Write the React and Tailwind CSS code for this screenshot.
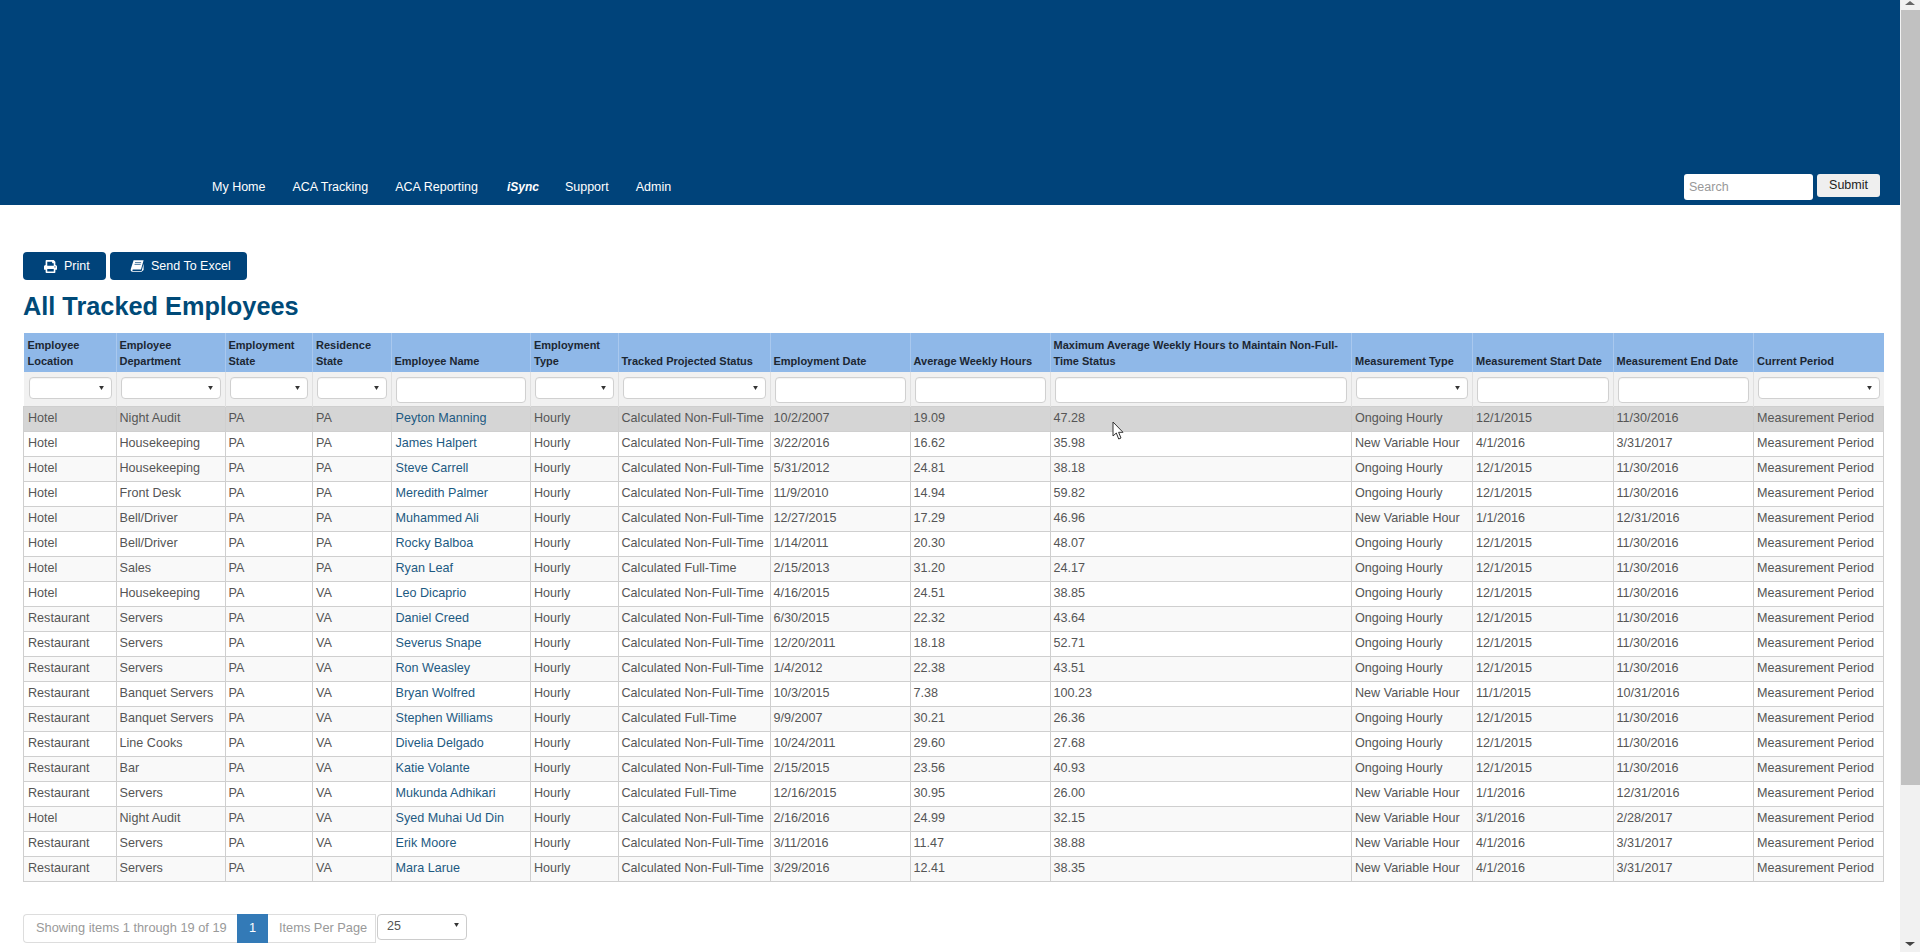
import { FaPrint } from "react-icons/fa";

const NFT = "Calculated Non-Full-Time";
const FT = "Calculated Full-Time";
const ONG = "Ongoing Hourly";
const NVH = "New Variable Hour";

const columns = [
  { label: "Employee Location", width: "w-[92.5px]", filter: "select" },
  { label: "Employee Department", width: "w-[109px]", filter: "select" },
  { label: "Employment State", width: "w-[87.5px]", filter: "select" },
  { label: "Residence State", width: "w-[78.5px]", filter: "select" },
  { label: "Employee Name", width: "w-[139.5px]", filter: "input" },
  { label: "Employment Type", width: "w-[87.5px]", filter: "select" },
  { label: "Tracked Projected Status", width: "w-[152px]", filter: "select" },
  { label: "Employment Date", width: "w-[140px]", filter: "input" },
  { label: "Average Weekly Hours", width: "w-[140px]", filter: "input" },
  { label: "Maximum Average Weekly Hours to Maintain Non-Full-Time Status", width: "w-[301.5px]", filter: "input" },
  { label: "Measurement Type", width: "w-[121px]", filter: "select" },
  { label: "Measurement Start Date", width: "w-[140.5px]", filter: "input" },
  { label: "Measurement End Date", width: "w-[140.5px]", filter: "input" },
  { label: "Current Period", width: "w-[130px]", filter: "select" },
];

const employees = [
  ["Hotel", "Night Audit", "PA", "Peyton Manning", NFT, "10/2/2007", "19.09", "47.28", ONG, "12/1/2015", "11/30/2016"],
  ["Hotel", "Housekeeping", "PA", "James Halpert", NFT, "3/22/2016", "16.62", "35.98", NVH, "4/1/2016", "3/31/2017"],
  ["Hotel", "Housekeeping", "PA", "Steve Carrell", NFT, "5/31/2012", "24.81", "38.18", ONG, "12/1/2015", "11/30/2016"],
  ["Hotel", "Front Desk", "PA", "Meredith Palmer", NFT, "11/9/2010", "14.94", "59.82", ONG, "12/1/2015", "11/30/2016"],
  ["Hotel", "Bell/Driver", "PA", "Muhammed Ali", NFT, "12/27/2015", "17.29", "46.96", NVH, "1/1/2016", "12/31/2016"],
  ["Hotel", "Bell/Driver", "PA", "Rocky Balboa", NFT, "1/14/2011", "20.30", "48.07", ONG, "12/1/2015", "11/30/2016"],
  ["Hotel", "Sales", "PA", "Ryan Leaf", FT, "2/15/2013", "31.20", "24.17", ONG, "12/1/2015", "11/30/2016"],
  ["Hotel", "Housekeeping", "VA", "Leo Dicaprio", NFT, "4/16/2015", "24.51", "38.85", ONG, "12/1/2015", "11/30/2016"],
  ["Restaurant", "Servers", "VA", "Daniel Creed", NFT, "6/30/2015", "22.32", "43.64", ONG, "12/1/2015", "11/30/2016"],
  ["Restaurant", "Servers", "VA", "Severus Snape", NFT, "12/20/2011", "18.18", "52.71", ONG, "12/1/2015", "11/30/2016"],
  ["Restaurant", "Servers", "VA", "Ron Weasley", NFT, "1/4/2012", "22.38", "43.51", ONG, "12/1/2015", "11/30/2016"],
  ["Restaurant", "Banquet Servers", "VA", "Bryan Wolfred", NFT, "10/3/2015", "7.38", "100.23", NVH, "11/1/2015", "10/31/2016"],
  ["Restaurant", "Banquet Servers", "VA", "Stephen Williams", FT, "9/9/2007", "30.21", "26.36", ONG, "12/1/2015", "11/30/2016"],
  ["Restaurant", "Line Cooks", "VA", "Divelia Delgado", NFT, "10/24/2011", "29.60", "27.68", ONG, "12/1/2015", "11/30/2016"],
  ["Restaurant", "Bar", "VA", "Katie Volante", NFT, "2/15/2015", "23.56", "40.93", ONG, "12/1/2015", "11/30/2016"],
  ["Restaurant", "Servers", "VA", "Mukunda Adhikari", FT, "12/16/2015", "30.95", "26.00", NVH, "1/1/2016", "12/31/2016"],
  ["Hotel", "Night Audit", "VA", "Syed Muhai Ud Din", NFT, "2/16/2016", "24.99", "32.15", NVH, "3/1/2016", "2/28/2017"],
  ["Restaurant", "Servers", "VA", "Erik Moore", NFT, "3/11/2016", "11.47", "38.88", NVH, "4/1/2016", "3/31/2017"],
  ["Restaurant", "Servers", "VA", "Mara Larue", NFT, "3/29/2016", "12.41", "38.35", NVH, "4/1/2016", "3/31/2017"],
];

const navItems = ["My Home", "ACA Tracking", "ACA Reporting", "iSync", "Support", "Admin"];

const BookIcon = () => (
  <svg viewBox="0 0 14 12" className="w-[14px] h-[12px]" fill="#fff">
    <path d="M3.6 0.3H13.6L11 9.4H3.2C2 9.4 2 11 3.2 11H11.6L13.6 3.8V10L11.6 11.8H2.6C1 11.8 0.4 10.4 0.8 9Z" />
    <path d="M5 2.6H11.2M4.5 4.4H10.7" stroke="#00437a" strokeWidth="0.7" />
  </svg>
);

const Caret = () => (
  <svg viewBox="0 0 6 5" className="absolute right-[8px] top-[9px] w-[5px] h-[4px] pointer-events-none" fill="#333">
    <path d="M0 0H6L3 5Z" />
  </svg>
);

const SelectFilter = () => (
  <div className="relative h-[22px]">
    <select className="block w-full h-full appearance-none bg-white border border-[#d0d0d0] rounded-[4px] shadow-[inset_0_1px_1px_rgba(0,0,0,0.05)]" />
    <Caret />
  </div>
);

const InputFilter = () => (
  <input className="block w-full h-[26px] bg-white border border-[#d0d0d0] rounded-[4px] shadow-[inset_0_1px_1px_rgba(0,0,0,0.05)]" />
);

const ActionButton = ({ icon, label, className }) => (
  <button className={`flex items-center h-[28px] bg-[#00437a] text-white text-[12.5px] rounded-[4px] ${className}`}>
    {icon}
    <span>{label}</span>
  </button>
);

const App = () => {
  return (
    <div className="relative flex h-screen overflow-hidden bg-white font-[Liberation_Sans,Arial,sans-serif]">
      <div className="flex-1 min-w-0">
        <header className="flex items-end justify-between h-[205px] bg-[#00437a] pb-[5px] pl-[212px] pr-[20px]">
          <nav className="flex gap-[27px] h-[26px] items-center">
            {navItems.map((item) => (
              <a key={item} className={`text-white ${item === "iSync" ? "ml-[2px] -mr-[1px] text-[12px] font-bold italic" : "text-[12.5px]"}`}>
                {item}
              </a>
            ))}
          </nav>
          <div className="flex gap-[4px] items-start">
            <input
              placeholder="Search"
              className="w-[129px] h-[26px] px-[5px] bg-white rounded-[3px] text-[12.5px] placeholder:text-[#999]"
            />
            <button className="w-[63px] h-[23px] bg-[#efefef] rounded-[3px] text-[12.5px] text-[#222]">Submit</button>
          </div>
        </header>

        <main className="pl-[23px] pr-[17px] pt-[47px]">
          <div className="flex gap-[4px]">
            <ActionButton
              label="Print"
              className="w-[83px] pl-[21px] gap-[7px]"
              icon={<FaPrint className="w-[13px] h-[13px]" />}
            />
            <ActionButton
              label="Send To Excel"
              className="w-[137px] pl-[20px] gap-[7px]"
              icon={<BookIcon />}
            />
          </div>

          <h1 className="mt-[13px] mb-[14px] h-[26px] leading-[26px] text-[25.3px] font-bold text-[#004a78]">
            All Tracked Employees
          </h1>

          <table className="table-fixed w-[1860px] border-collapse border-b border-[#c8c8c8] text-[12.6px] text-[#555]">
            <colgroup>
              {columns.map((col) => (
                <col key={col.label} className={col.width} />
              ))}
            </colgroup>
            <thead>
              <tr className="h-[39px] bg-[#8fb8e8]">
                {columns.map((col) => (
                  <th
                    key={col.label}
                    className="align-bottom text-left font-bold text-[11px] leading-[16px] text-[#1c2733] pl-[3px] first:pl-[4px] pr-[4px] pb-[3px] border-l border-[#a9c8ee] first:border-l-0"
                  >
                    {col.label}
                  </th>
                ))}
              </tr>
              <tr className="h-[34px] bg-[#f1f1f1]">
                {columns.map((col) => (
                  <td key={col.label} className="align-top pt-[5px] pl-[4px] first:pl-[5px] pr-[4px] border-l border-[#e0e0e0] first:border-l-0">
                    {col.filter === "select" ? <SelectFilter /> : <InputFilter />}
                  </td>
                ))}
              </tr>
            </thead>
            <tbody>
              {employees.map((emp, i) => {
                const stripe = i === 0 ? "bg-[#d5d5d5]" : i % 2 === 0 ? "bg-[#f9f9f9]" : "bg-white";
                return (
                  <tr key={emp[3]} className={`h-[25px] ${stripe}`}>
                    <td className="pl-[4px] border border-[#cfcfcf]">{emp[0]}</td>
                    <td className="pl-[3px] border border-[#cfcfcf]">{emp[1]}</td>
                    <td className="pl-[3px] border border-[#cfcfcf]">PA</td>
                    <td className="pl-[3px] border border-[#cfcfcf]">{emp[2]}</td>
                    <td className="pl-[4px] border border-[#cfcfcf] text-[#1d5a82]">{emp[3]}</td>
                    <td className="pl-[3px] border border-[#cfcfcf]">Hourly</td>
                    {emp.slice(4).map((val, j) => (
                      <td key={j} className="pl-[3px] border border-[#cfcfcf] whitespace-nowrap">{val}</td>
                    ))}
                    <td className="pl-[3px] border border-[#cfcfcf]">Measurement Period</td>
                  </tr>
                );
              })}
            </tbody>
          </table>

          <div className="flex items-start mt-[32px] text-[12.8px] text-[#999]">
            <span className="flex items-center h-[29px] w-[214px] pl-[12px] border border-[#ddd] border-r-0 rounded-l-[4px]">
              Showing items 1 through 19 of 19
            </span>
            <span className="flex items-center justify-center w-[31px] h-[29px] bg-[#337ab7] text-white">1</span>
            <span className="flex items-center h-[29px] w-[108px] pl-[11px] border border-[#ddd] border-l-0">Items Per Page</span>
            <div className="relative ml-[1px] w-[90px] h-[26px]">
              <div className="flex items-center h-full pl-[9px] bg-white border border-[#ccc] rounded-[4px] text-[#555] text-[12.5px]">25</div>
              <Caret />
            </div>
          </div>
        </main>
      </div>

      <aside className="flex flex-col w-[20px] h-full bg-[#f1f1f1]">
        <div className="flex justify-center items-start h-[10px]">
          <div className="mt-[1px] w-0 h-0 border-x-[5px] border-x-transparent border-b-[4px] border-b-[#666]" />
        </div>
        <div className="h-[775px] ml-[1px] bg-[#c1c1c1]" />
        <div className="flex-1 flex justify-center items-end pb-[6px]">
          <div className="w-0 h-0 border-x-[5px] border-x-transparent border-t-[4px] border-t-[#444]" />
        </div>
      </aside>

      {/* mouse pointer from the recording */}
      <svg viewBox="0 0 12 19" className="absolute left-[1112px] top-[421px] w-[12px] h-[19px]">
        <path d="M1 1V15L4.3 12L6.7 18L9 17L6.6 11.3H11Z" fill="#fff" stroke="#333" strokeWidth="1" />
      </svg>
    </div>
  );
};

export default App;
